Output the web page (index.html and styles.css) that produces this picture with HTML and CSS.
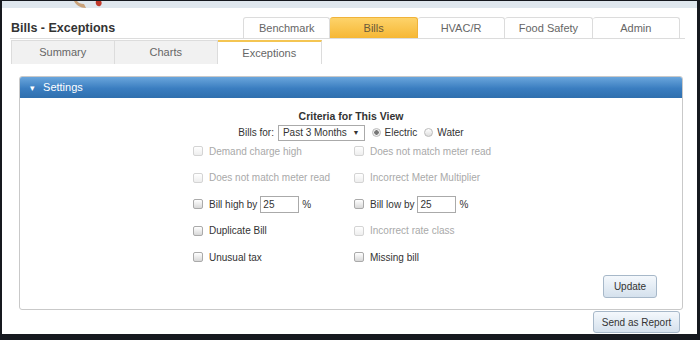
FILE: index.html
```html
<!DOCTYPE html>
<html>
<head>
<title>Bills - Exceptions</title>
<link rel="stylesheet" href="styles.css">
</head>
<body>

<div class="window">
<!-- bout du logo coupé en haut -->
<svg class="logo-bit" width="40" height="10" viewBox="0 0 40 10">
<path d="M2 0 C4 4 8 7 14 7 L12 3 C9 3 6 2 5 0 Z" fill="#c9a27a"/>
<path d="M24 0 C23 3 25 6 28 5 C30 4 30 1 29 0 Z" fill="#c0392b"/>
</svg>

<div class="page">
<!-- en-tête : titre + onglets principaux -->
<div class="head">
<h1 class="title">Bills - Exceptions</h1>
<div class="main-tabs">
<div class="main-tab">Benchmark</div>
<div class="main-tab active">Bills</div>
<div class="main-tab">HVAC/R</div>
<div class="main-tab">Food Safety</div>
<div class="main-tab">Admin</div>
</div>
</div>

<!-- sous-onglets -->
<div class="sub-tabs">
<div class="sub-tab">Summary</div>
<div class="sub-tab">Charts</div>
<div class="sub-tab active">Exceptions</div>
</div>

<!-- panneau Settings -->
<div class="panel">
<div class="panel-head"><span class="caret">&#9662;</span> Settings</div>
<div class="panel-body">
<div class="criteria">Criteria for This View</div>
<div class="bills-for">
<span>Bills for:</span>
<span class="select">Past 3 Months <span class="arrow">&#9660;</span></span>
<span class="radio checked"></span><span>Electric</span>
<span class="radio"></span><span>Water</span>
</div>

<div class="checks">
<label class="check off"><span class="box"></span>Demand charge high</label>
<label class="check off"><span class="box"></span>Does not match meter read</label>
<label class="check off"><span class="box"></span>Does not match meter read</label>
<label class="check off"><span class="box"></span>Incorrect Meter Multiplier</label>
<label class="check"><span class="box"></span>Bill high by <span class="num">25</span>%</label>
<label class="check"><span class="box"></span>Bill low by <span class="num">25</span>%</label>
<label class="check"><span class="box"></span>Duplicate Bill</label>
<label class="check off"><span class="box"></span>Incorrect rate class</label>
<label class="check"><span class="box"></span>Unusual tax</label>
<label class="check"><span class="box"></span>Missing bill</label>
</div>

<div class="actions">
<button class="btn update-btn">Update</button>
</div>
</div>
</div>

<div class="report-row">
<button class="btn">Send as Report</button>
</div>
</div>
</div>

</body>
</html>
```

FILE: styles.css
```css
:root {
--line: #dcdcdc;
--text: #333;
--muted: #a9a9a9;
--orange: #f6b734;
}

* {
margin: 0;
padding: 0;
box-sizing: border-box;
font-family: 'Liberation Sans', Arial, sans-serif;
}

body {
background: #16191f;
height: 340px;
overflow: hidden;
}

.window {
position: relative;
margin: 1px 3px 0 2px;
height: 333px;
background: #fff;
border-top: 7px solid #dfe7ee;
}

.logo-bit {
position: absolute;
left: 70px;
top: -7px;
}

.page {
padding: 0 12px 0 8px;
}

/* en-tête */
.head {
display: flex;
align-items: flex-end;
height: 31px;
border-bottom: 1px solid var(--line);
}

.title {
flex: 1;
font-size: 12.5px;
font-weight: bold;
color: var(--text);
padding: 0 0 3px 1px;
}

.main-tabs {
display: flex;
margin-right: 5px;
}

.main-tab {
width: 87.4px;
height: 21px;
line-height: 20px;
text-align: center;
font-size: 11px;
color: #666;
background: #fff;
border: 1px solid var(--line);
border-bottom: none;
border-left: none;
border-radius: 3px 3px 0 0;
}

.main-tab:first-child {
border-left: 1px solid var(--line);
}

.main-tab.active {
background: linear-gradient(#fdd36a, var(--orange));
border-color: #f0b33a;
color: #6a5a3a;
}

/* sous-onglets */
.sub-tabs {
display: flex;
margin: 1px 0 0 1px;
}

.sub-tab {
width: 103.5px;
height: 24px;
line-height: 23px;
text-align: center;
font-size: 11px;
color: #666;
background: #f1f1f1;
border: 1px solid var(--line);
border-bottom: none;
border-left: none;
}

.sub-tab:first-child {
border-left: 1px solid var(--line);
}

.sub-tab.active {
background: #fff;
border-top: 2px solid #f4c552;
line-height: 22px;
}

/* panneau */
.panel {
margin: 12px 2px 0 9px;
border: 1px solid #c9c9c9;
border-radius: 3px;
}

.panel-head {
height: 21px;
line-height: 21px;
padding-left: 10px;
font-size: 11px;
color: #fff;
background: linear-gradient(#6aa6dc, #3a7dc0 55%, #2f6fae);
border-radius: 2px 2px 0 0;
}

.caret {
font-size: 9px;
margin-right: 5px;
}

.panel-body {
height: 211px;
padding-top: 12px;
display: flex;
flex-direction: column;
align-items: center;
color: var(--text);
font-size: 10px;
}

.criteria {
font-size: 10.5px;
font-weight: bold;
line-height: 13px;
}

.bills-for {
display: flex;
align-items: center;
gap: 4px;
height: 17px;
margin-top: 1px;
}

.select {
display: inline-block;
height: 16px;
line-height: 14px;
padding: 0 4px;
border: 1px solid #aaa;
background: #fff;
}

.arrow {
font-size: 7px;
margin-left: 3px;
position: relative;
top: -1px;
}

.radio {
width: 9px;
height: 9px;
border-radius: 50%;
border: 1px solid #bbb;
background: linear-gradient(#fff, #ddd);
margin-left: 3px;
}

.radio.checked {
background: radial-gradient(circle, #777 0 2px, #eee 2.5px);
}

.checks {
display: grid;
grid-template-columns: 161px 161px;
grid-auto-rows: 26.5px;
padding-left: 6px;
margin-top: -3px;
}

.check {
display: flex;
align-items: center;
gap: 6px;
white-space: nowrap;
}

.check.off {
color: var(--muted);
}

.box {
width: 10px;
height: 10px;
border: 1px solid #aaa;
border-radius: 2px;
background: linear-gradient(#fff, #d8d8d8);
}

.check.off .box {
border-color: #d4d4d4;
background: linear-gradient(#fff, #eee);
}

.num {
display: inline-block;
width: 39px;
height: 17px;
line-height: 15px;
padding-left: 2px;
border: 1px solid #aaa;
margin: 0 -3px 0 -3px;
}

.actions {
align-self: flex-end;
margin: 4px 25px 0 0;
}

.btn {
height: 23px;
padding: 0 6px;
font-size: 10px;
color: #333;
white-space: nowrap;
border: 1px solid #a7b8c9;
border-radius: 3px;
background: linear-gradient(#f4f8fc, #d5e1ed);
}

.update-btn {
width: 54px;
}

.report-row {
display: flex;
justify-content: flex-end;
margin: 1px 5px 0 0;
}

.report-row .btn {
width: 87px;
height: 22px;
}
```
